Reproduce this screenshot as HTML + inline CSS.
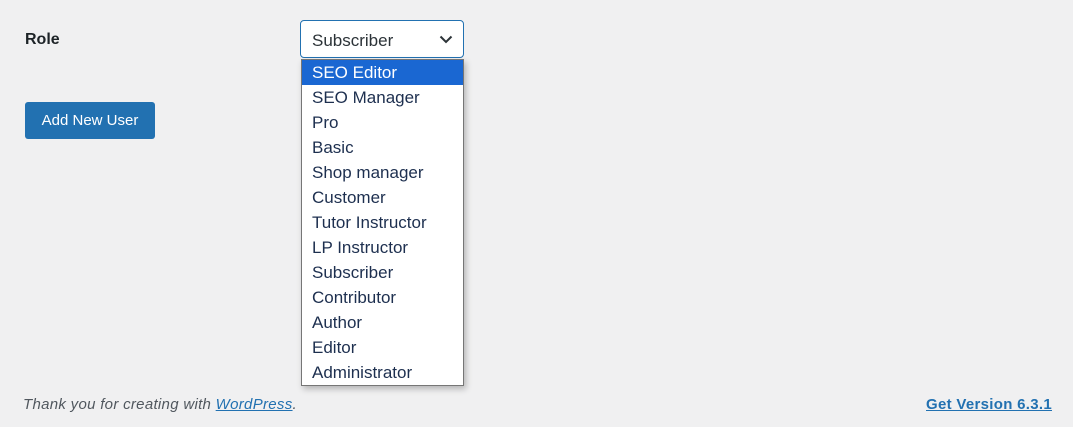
<!DOCTYPE html>
<html><head><style>
body{margin:0;width:1073px;height:427px;background:#f0f0f1;font-family:"Liberation Sans",sans-serif;position:relative;overflow:hidden;color:#1d2327}
.role{position:absolute;left:25px;top:31px;font-size:16px;font-weight:600}
.sel{position:absolute;left:300px;top:20px;width:162px;height:36px;border:1.5px solid #2271b1;border-radius:4px;background:#fff;box-sizing:content-box}
.sel span{position:absolute;left:11px;top:10px;font-size:17px;color:#2c3338}
.sel svg{position:absolute;right:10px;top:14px}
.btn{position:absolute;left:25px;top:102px;width:130px;height:37px;background:#2271b1;border-radius:3px;color:#fff;font-size:15px;line-height:37px;text-align:center}
.dd{position:absolute;left:301px;top:59px;width:161px;height:325px;background:#fff;border:1px solid #767676;box-shadow:2px 3px 6px rgba(0,0,0,.25)}
.dd div{height:25px;line-height:25px;padding-left:10px;font-size:17px;color:#1d2f4f}
.dd .a{background:#1a67d2;color:#fff}
.foot{position:absolute;left:23px;top:396px;font-size:15px;font-style:italic;color:#50575e;letter-spacing:0.3px}
a{color:#2271b1;text-decoration:underline}
.ver{position:absolute;right:21px;top:396px;font-size:15px;font-weight:600;color:#2271b1;text-decoration:underline;letter-spacing:0.3px}
</style></head><body>
<div class="role">Role</div>
<div class="sel"><span>Subscriber</span><svg width="14" height="9" viewBox="0 0 14 9"><path d="M1.5 1.5L7 7L12.5 1.5" fill="none" stroke="#2c3338" stroke-width="2"/></svg></div>
<div class="btn">Add New User</div>
<div class="dd">
<div class="a">SEO Editor</div><div>SEO Manager</div><div>Pro</div><div>Basic</div><div>Shop manager</div><div>Customer</div><div>Tutor Instructor</div><div>LP Instructor</div><div>Subscriber</div><div>Contributor</div><div>Author</div><div>Editor</div><div>Administrator</div>
</div>
<div class="foot">Thank you for creating with <a>WordPress</a>.</div>
<div class="ver">Get Version 6.3.1</div>
</body></html>
